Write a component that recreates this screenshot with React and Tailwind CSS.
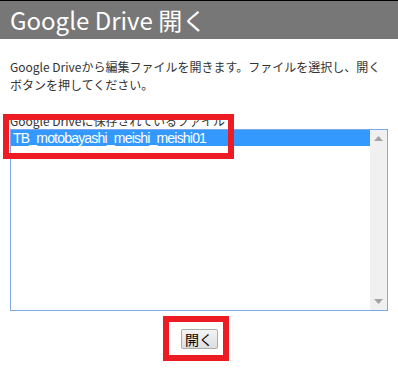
import React from 'react';

const jp = { fontFamily: '"Noto Sans CJK JP", "Noto Sans", sans-serif' };

export default function App() {
  return (
    <div className="relative w-[398px] h-[371px] bg-white overflow-hidden" style={jp}>
      {/* Title bar */}
      <div className="h-[39px] border-t border-black bg-[#777777] flex items-center pl-[10px]">
        <span className="text-[24px] leading-none text-white">Google Drive 開く</span>
      </div>

      <div className="px-[10px]">
        <p className="mt-[19px] text-[12px] leading-[18px] text-[#333333]">
          Google Driveから編集ファイルを開きます。ファイルを選択し、開く<br />
          ボタンを押してください。
        </p>

        <div className="mt-[19px] text-[12px] leading-[16px] text-[#333333]">
          Google Driveに保存されているファイル
        </div>

        {/* File list */}
        <div className="h-[182px] border border-[#80a8e8] flex">
          <div className="flex-1">
            <div
              className="h-[16px] bg-[#3399ff] text-white text-[14px] leading-[16px] pl-[2px] tracking-[-0.8px]"
              style={{ fontFamily: '"Liberation Sans", Arial, sans-serif' }}
            >
              TB_motobayashi_meishi_meishi01
            </div>
          </div>
          <div className="w-[17px] bg-[#f0f0f0] flex flex-col items-center justify-between py-[6px]">
            <svg width="9" height="5" viewBox="0 0 9 5">
              <path d="M0 5 L4.5 0 L9 5 Z" fill="#a3a3a3" />
            </svg>
            <svg width="9" height="5" viewBox="0 0 9 5">
              <path d="M0 0 L4.5 5 L9 0 Z" fill="#a3a3a3" />
            </svg>
          </div>
        </div>

        <div className="flex justify-center mt-[18px]">
          <button className="w-[37px] h-[20px] rounded-[2px] border border-[#acacac] bg-gradient-to-b from-[#f4f4f4] to-[#dedede] text-[14px] leading-none text-black flex items-center justify-center">
            開く
          </button>
        </div>
      </div>

      {/* Red annotation boxes */}
      <div className="absolute left-[3px] top-[114px] w-[231px] h-[45px] border-[6px] border-[#ed1c24]" />
      <div className="absolute left-[163px] top-[316px] w-[66px] h-[45px] border-[6px] border-[#ed1c24]" />
    </div>
  );
}
